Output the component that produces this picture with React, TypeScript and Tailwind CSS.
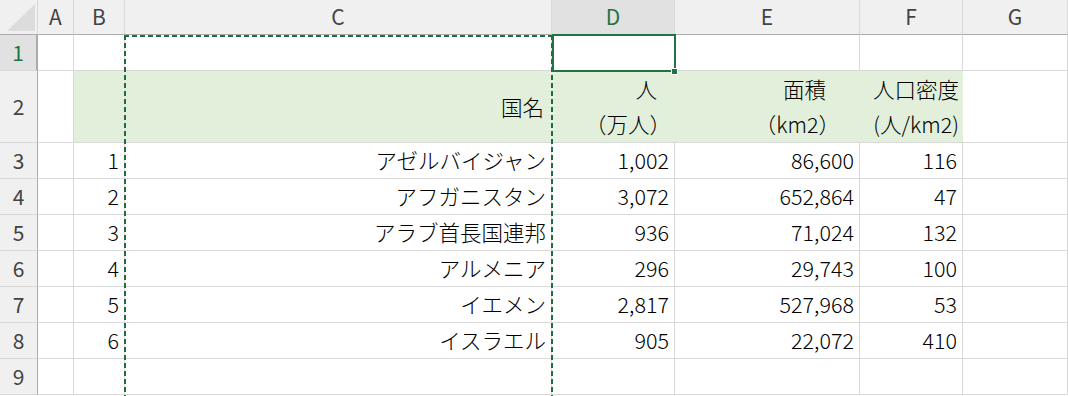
const COLS = ["A", "B", "C", "D", "E", "F", "G"];

const rows = [
  { no: "1", name: "アゼルバイジャン", pop: "1,002", area: "86,600", dens: "116" },
  { no: "2", name: "アフガニスタン", pop: "3,072", area: "652,864", dens: "47" },
  { no: "3", name: "アラブ首長国連邦", pop: "936", area: "71,024", dens: "132" },
  { no: "4", name: "アルメニア", pop: "296", area: "29,743", dens: "100" },
  { no: "5", name: "イエメン", pop: "2,817", area: "527,968", dens: "53" },
  { no: "6", name: "イスラエル", pop: "905", area: "22,072", dens: "410" },
];

const font = "font-['Noto_Sans_CJK_JP','Noto_Sans',sans-serif]";

function ColHead({ label }: { label: string }) {
  const selected = label === "D";
  return (
    <div
      className={
        "flex items-center justify-center border-r border-b border-r-[#d9d9d9] border-b-[#ababab] text-[21px] " +
        (selected ? "bg-[#e1e1e1] text-[#217346]" : "bg-[#f0f0f0] text-[#444]")
      }
    >
      {label}
    </div>
  );
}

function RowHead({ n, selected = false }: { n: number; selected?: boolean }) {
  return (
    <div
      className={
        "flex items-center justify-center border-b border-r border-b-[#d9d9d9] border-r-[#ababab] text-[21px] " +
        (selected ? "bg-[#e1e1e1] text-[#217346] border-r-2 border-r-[#217346]" : "bg-[#f0f0f0] text-[#444]")
      }
    >
      {n}
    </div>
  );
}

function Cell({ children, fill = false }: { children?: React.ReactNode; fill?: boolean }) {
  return (
    <div
      className={
        "flex items-center justify-end pr-[5px] text-[21.5px] font-light text-black border-b border-b-[#d9d9d9] whitespace-nowrap " +
        (fill ? "bg-[#e2efda]" : "bg-white border-r border-r-[#d9d9d9]")
      }
    >
      {children}
    </div>
  );
}

function HeadCell({ top, bottom, topPad, bottomPad }: { top: string; bottom: string; topPad: string; bottomPad: string }) {
  return (
    <div className="flex flex-col items-end justify-end bg-[#e2efda] border-b border-b-[#d9d9d9] text-[21.5px] font-light text-black whitespace-nowrap">
      <div className={"h-[36px] flex items-center " + topPad}>{top}</div>
      <div className={"h-[35px] flex items-center " + bottomPad}>{bottom}</div>
    </div>
  );
}

export default function App() {
  return (
    <div className={"relative w-[1068px] h-[396px] overflow-hidden bg-white " + font}>
      <div className="grid grid-cols-[38px_36px_51px_427px_123px_185px_103px_105px] grid-rows-[35px_36px_72px_repeat(7,36px)]">
        {/* corner */}
        <div className="relative bg-[#f0f0f0] border-r border-b border-r-[#d9d9d9] border-b-[#ababab]">
          <svg className="absolute left-0 top-0" width="38" height="35" viewBox="0 0 38 35">
            <polygon points="7,31 35,31 35,4" fill="#dcdcdc" />
          </svg>
        </div>
        {COLS.map((c) => (
          <ColHead key={c} label={c} />
        ))}

        {/* row 1 */}
        <RowHead n={1} selected />
        {COLS.map((c) => (
          <Cell key={c} />
        ))}

        {/* row 2 */}
        <RowHead n={2} />
        <Cell />
        <Cell fill />
        <div className="flex items-center justify-end pr-[8px] pt-[2px] bg-[#e2efda] border-b border-b-[#d9d9d9] text-[21.5px] font-light text-black">
          国名
        </div>
        <HeadCell top="人" bottom="（万人）" topPad="pr-[18px]" bottomPad="pr-[4px]" />
        <HeadCell top="面積" bottom="（km2）" topPad="pr-[34px]" bottomPad="pr-[20px]" />
        <HeadCell top="人口密度" bottom="(人/km2)" topPad="pr-[4px]" bottomPad="pr-[4px]" />
        <Cell />

        {rows.map((r, i) => (
          <Row key={r.no} n={i + 3} r={r} />
        ))}
        <RowHead n={9} />
        {COLS.map((c) => (
          <Cell key={c} />
        ))}
      </div>

      {/* copy marquee around column C */}
      <div className="absolute left-[124px] top-[35px] w-[429px] h-[2px] bg-[repeating-linear-gradient(90deg,#1e6e42_0_5px,transparent_5px_8px)]" />
      <div className="absolute left-[124px] top-[35px] w-[2px] h-[370px] bg-[repeating-linear-gradient(180deg,#1e6e42_0_5px,transparent_5px_8px)]" />
      <div className="absolute left-[551px] top-[35px] w-[2px] h-[370px] bg-[repeating-linear-gradient(180deg,#1e6e42_0_5px,transparent_5px_8px)]" />

      {/* active cell D1 */}
      <div className="absolute left-[552px] top-[34px] w-[124px] h-[38px] border-2 border-[#217346]" />
      <div className="absolute left-[671px] top-[68px] w-[7px] h-[7px] bg-[#217346] border border-white" />
    </div>
  );
}

function Row({ n, r }: { n: number; r: (typeof rows)[number] }) {
  return (
    <>
      <RowHead n={n} />
      <Cell />
      <Cell>{r.no}</Cell>
      <Cell>{r.name}</Cell>
      <Cell>{r.pop}</Cell>
      <Cell>{r.area}</Cell>
      <Cell>{r.dens}</Cell>
      <Cell />
    </>
  );
}
